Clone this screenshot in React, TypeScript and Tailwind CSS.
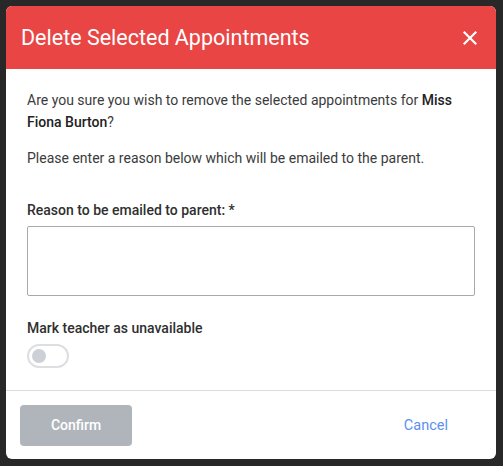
import React, { useState } from 'react';

const App: React.FC = () => {
  const [unavailable, setUnavailable] = useState(false);
  const [reason, setReason] = useState('');

  return (
    <div className="min-h-screen w-full bg-[#282828] p-[6px] pr-[7px] font-['Roboto',sans-serif]">
      <div className="w-[490px] h-[453px] bg-white rounded-[6px] overflow-hidden flex flex-col">
        {/* Header */}
        <div className="h-[63px] bg-[#e94545] flex items-center justify-between pl-[15px] pr-[18px] shrink-0">
          <h1 className="text-white text-[21.5px] font-normal leading-none pt-[1px]">Delete Selected Appointments</h1>
          <button className="text-white" aria-label="Close">
            <svg width="16" height="16" viewBox="0 0 16 16" fill="none" stroke="currentColor" strokeWidth="2.2" strokeLinecap="square">
              <path d="M2.5 2.5 L13.5 13.5 M13.5 2.5 L2.5 13.5" />
            </svg>
          </button>
        </div>

        {/* Body */}
        <div className="flex-1 px-[21px] pt-[20px] text-[14px] text-[#3b3b3b]">
          <p className="leading-[22px]">
            Are you sure you wish to remove the selected appointments for{' '}
            <span className="font-medium text-[#222]">Miss</span>{' '}
            <span className="font-medium text-[#222]">Fiona Burton</span>?
          </p>
          <p className="leading-[22px] mt-[14px]">Please enter a reason below which will be emailed to the parent.</p>

          <label className="block mt-[30px] leading-[22px] font-medium text-[#2f2f2f]">
            Reason to be emailed to parent: *
          </label>
          <textarea
            value={reason}
            onChange={(e) => setReason(e.target.value)}
            className="mt-[5px] block w-full h-[70px] border border-[#a9a9a9] rounded-[2px] resize-none outline-none px-2 py-1"
          />

          <div className="mt-[21px] leading-[22px] font-medium text-[#2f2f2f]">Mark teacher as unavailable</div>
          <button
            onClick={() => setUnavailable(!unavailable)}
            className="mt-[5px] w-[42px] h-[24px] rounded-full border-2 border-[#dcdee2] flex items-center px-[3px]"
          >
            <span className="w-[14px] h-[14px] rounded-full bg-[#cdd0d6]" />
          </button>
        </div>

        {/* Footer */}
        <div className="border-t border-[#dddddd] h-[69px] shrink-0 flex items-start justify-between pl-[14px] pr-[48px] pt-[14px]">
          <button className="w-[112px] h-[41px] rounded-[4px] bg-[#b0b5bc] text-white text-[14px] font-medium">
            Confirm
          </button>
          <button className="h-[41px] text-[#5b8ff0] text-[14.5px]">Cancel</button>
        </div>
      </div>
    </div>
  );
};

export default App;
